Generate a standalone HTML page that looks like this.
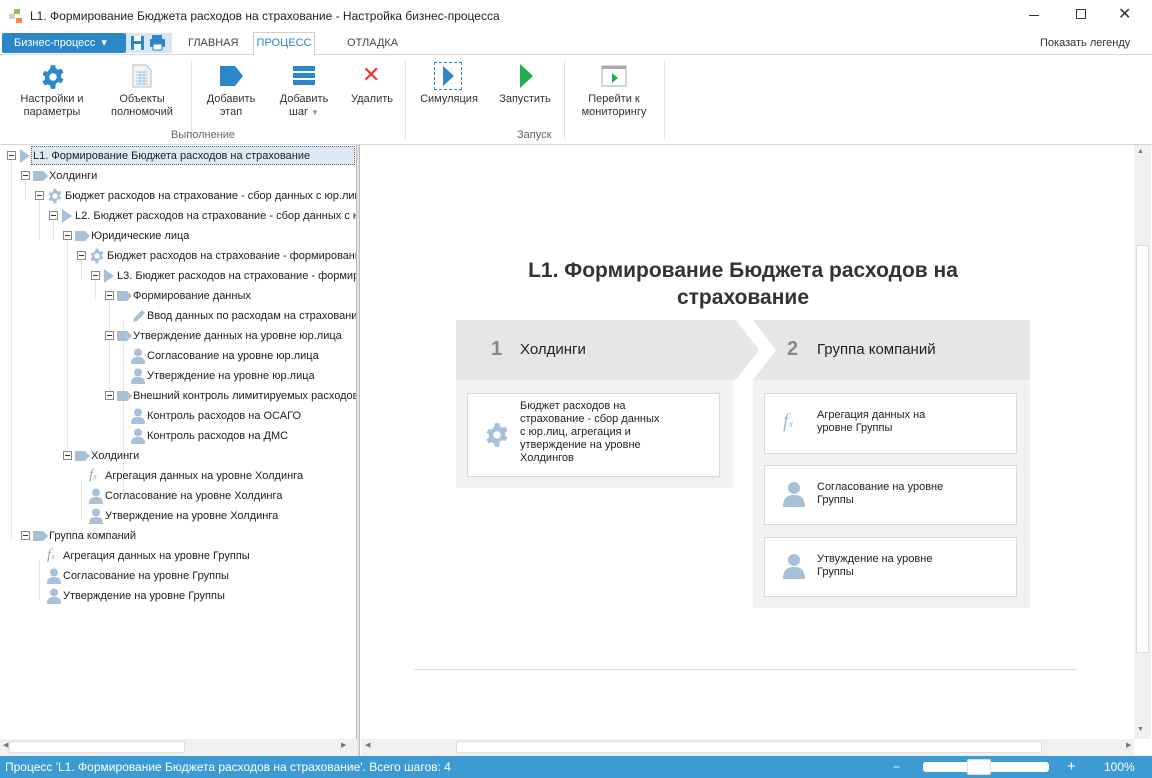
<!DOCTYPE html>
<html><head><meta charset="utf-8"><style>
*{margin:0;padding:0;box-sizing:border-box}
body{width:1152px;height:778px;overflow:hidden;background:#fff;font-family:"Liberation Sans","DejaVu Sans",sans-serif;font-size:11px;color:#222;position:relative}
.a{position:absolute}
.tb{font-size:12px;white-space:nowrap}
.rb{text-align:center;font-size:11px;color:#333;line-height:13px}
.row{position:absolute;height:20px;line-height:20px;white-space:nowrap;font-size:11px}
.ex{position:absolute;width:9px;height:9px;border:1px solid #888;background:#fff;top:5px}
.ex:after{content:"";position:absolute;left:1px;top:3px;width:5px;height:1px;background:#333}
.card{position:absolute;background:#fff;border:1px solid #d8d8d8;font-size:11px;line-height:13px;color:#222}
</style></head><body>
<!-- title -->
<svg class="a" style="left:8px;top:8px" width="16" height="16"><rect x="6" y="1" width="6" height="5" fill="#8bc34a"/><rect x="1" y="6" width="6" height="5" fill="#ccc"/><rect x="8" y="10" width="6" height="5" fill="#f28b50"/></svg>
<div class="a tb" style="left:30px;top:9px">L1. Формирование Бюджета расходов на страхование - Настройка бизнес-процесса</div>
<div class="a" style="left:1029px;top:15px;width:10px;height:1px;background:#333"></div>
<div class="a" style="left:1076px;top:9px;width:10px;height:10px;border:1px solid #333"></div>
<div class="a" style="left:1118px;top:4px;font-size:16px;color:#333">✕</div>
<!-- tabs -->
<div class="a" style="left:2px;top:33px;width:124px;height:20px;background:#2b87c8;border-radius:2px;color:#fff;line-height:20px;padding-left:12px">Бизнес-процесс &nbsp;▾</div>
<div class="a" style="left:126px;top:33px;width:46px;height:20px;background:#d6e6f3"></div>
<svg class="a" style="left:130px;top:35px" width="40" height="16"><rect x="1" y="1" width="13" height="14" rx="1" fill="#2b87c8"/><rect x="4" y="1" width="7" height="5" fill="#fff"/><rect x="4" y="9" width="7" height="6" fill="#fff"/><rect x="22" y="0" width="10" height="5" fill="#2b87c8"/><rect x="20" y="4" width="15" height="8" rx="1" fill="#2b87c8"/><rect x="23" y="9" width="9" height="6" fill="#fff" stroke="#2b87c8"/></svg>
<div class="a" style="left:188px;top:37px;color:#444">ГЛАВНАЯ</div>
<div class="a" style="left:253px;top:32px;width:62px;height:23px;border:1px solid #d0d0d0;border-bottom:none;background:#fff;color:#2b87c8;text-align:center;line-height:21px;z-index:2">ПРОЦЕСС</div>
<div class="a" style="left:347px;top:37px;color:#444">ОТЛАДКА</div>
<div class="a" style="left:1040px;top:37px;color:#333">Показать легенду</div>
<div class="a" style="left:0;top:54px;width:1152px;height:1px;background:#d6d6d6"></div>
<!-- ribbon -->
<div class="a" style="left:0;top:55px;width:1152px;height:90px;background:#fff"></div>
<svg class="a" style="left:40px;top:64px" width="26" height="26" viewBox="0 0 24 24"><path fill="#2b87c8" d="M10 1h4l.6 3a8 8 0 0 1 2.2 1.3l2.9-1 2 3.4-2.3 2a8 8 0 0 1 0 2.6l2.3 2-2 3.4-2.9-1a8 8 0 0 1-2.2 1.3L14 23h-4l-.6-3a8 8 0 0 1-2.2-1.3l-2.9 1-2-3.4 2.3-2a8 8 0 0 1 0-2.6l-2.3-2 2-3.4 2.9 1A8 8 0 0 1 9.4 4z"/><circle cx="12" cy="12" r="3.5" fill="#fff"/></svg>
<div class="a rb" style="left:12px;top:93px;width:80px">Настройки и<br>параметры</div>
<svg class="a" style="left:132px;top:64px" width="20" height="24"><path d="M1 1h13l5 5v17H1z" fill="#f4f4f4" stroke="#bbb"/><g stroke="#9cc4e4"><path d="M4 8h12M4 11h12M4 14h12M4 17h12M4 20h12M8 8v13M12 8v13"/></g></svg>
<div class="a rb" style="left:100px;top:93px;width:84px">Объекты<br>полномочий</div>
<div class="a" style="left:191px;top:60px;width:1px;height:80px;background:#e4e4e4"></div>
<svg class="a" style="left:220px;top:66px" width="24" height="20"><path d="M0 0h15l8 10-8 10H0z" fill="#2b87c8"/></svg>
<div class="a rb" style="left:198px;top:93px;width:66px">Добавить<br>этап</div>
<svg class="a" style="left:293px;top:66px" width="22" height="20"><rect y="0" width="22" height="5" fill="#2b87c8"/><rect y="7" width="22" height="5" fill="#2b87c8"/><rect y="14" width="22" height="5" fill="#2b87c8"/></svg>
<div class="a rb" style="left:271px;top:93px;width:66px">Добавить<br>шаг <span style="color:#999;font-size:8px">▼</span></div>
<div class="a" style="left:362px;top:62px;color:#e53935;font-size:22px">✕</div>
<div class="a rb" style="left:346px;top:93px;width:52px">Удалить</div>
<div class="a" style="left:405px;top:60px;width:1px;height:80px;background:#e4e4e4"></div>
<div class="a" style="left:434px;top:62px;width:28px;height:28px;border:1px dashed #2b87c8"></div>
<svg class="a" style="left:443px;top:66px" width="12" height="20"><path d="M0 0l11 10L0 20z" fill="#2b87c8"/></svg>
<div class="a rb" style="left:414px;top:93px;width:70px">Симуляция</div>
<svg class="a" style="left:520px;top:64px" width="14" height="24"><path d="M0 0l13 12L0 24z" fill="#1fae4e"/></svg>
<div class="a rb" style="left:492px;top:93px;width:66px">Запустить</div>
<div class="a" style="left:564px;top:60px;width:1px;height:80px;background:#e4e4e4"></div>
<svg class="a" style="left:601px;top:65px" width="26" height="22"><rect x="1" y="1" width="24" height="20" fill="#fff" stroke="#aaa"/><rect x="1" y="1" width="24" height="3" fill="#aaa"/><path d="M11 8l6 5-6 5z" fill="#1fae4e"/></svg>
<div class="a rb" style="left:570px;top:93px;width:88px">Перейти к<br>мониторингу</div>
<div class="a" style="left:664px;top:60px;width:1px;height:80px;background:#e4e4e4"></div>
<div class="a" style="left:171px;top:129px;color:#666">Выполнение</div>
<div class="a" style="left:517px;top:129px;color:#666">Запуск</div>
<div class="a" style="left:0;top:144px;width:1152px;height:1px;background:#d6d6d6"></div>
<!-- left panel -->
<div class="a" style="left:0;top:145px;width:357px;height:611px;border-right:1px solid #bbb;overflow:hidden">
<div class="a" style="left:31px;top:1px;width:324px;height:19px;background:#dde9f5;border:1px dotted #666"></div>
<svg class="a" style="left:0;top:0" width="357" height="600">
<g stroke="#ccc" stroke-dasharray="1 1"><path d="M11.5 16v380M25.5 36v20M39.5 56v40M53.5 76v20M67.5 96v220M81.5 116v20M95.5 136v20M109.5 156v100M123.5 176v180M81.5 336v40M39.5 416v40"/></g>
</svg>
<div id="tree"></div>
</div>
<div class="a" style="left:357px;top:145px;width:3px;height:611px;background:#e4e4e4;border-right:1px solid #bbb"></div>
<!-- left scrollbar -->
<div class="a" style="left:0;top:739px;width:357px;height:17px;background:#f0f0f0"></div>
<div class="a" style="left:9px;top:741px;width:176px;height:12px;background:#fff;border:1px solid #ddd;border-radius:2px"></div>
<div class="a" style="left:3px;top:741px;font-size:7px;color:#777">◀</div>
<div class="a" style="left:341px;top:741px;font-size:7px;color:#777">▶</div>
<!-- right panel -->
<div class="a" style="left:1134px;top:145px;width:17px;height:594px;background:#f0f0f0"></div>
<div class="a" style="left:1136px;top:245px;width:13px;height:408px;background:#fff;border:1px solid #ddd;border-radius:2px"></div>
<div class="a" style="left:1137px;top:148px;font-size:7px;color:#777">▲</div>
<div class="a" style="left:1137px;top:726px;font-size:7px;color:#777">▼</div>
<div class="a" style="left:361px;top:739px;width:773px;height:17px;background:#f0f0f0"></div>
<div class="a" style="left:456px;top:741px;width:586px;height:12px;background:#fff;border:1px solid #ddd;border-radius:2px"></div>
<div class="a" style="left:365px;top:741px;font-size:7px;color:#777">◀</div>
<div class="a" style="left:1126px;top:741px;font-size:7px;color:#777">▶</div>
<div class="a" style="left:414px;top:669px;width:663px;height:1px;background:#ddd"></div>
<div class="a" style="left:460px;top:257px;width:566px;text-align:center;font-size:21px;font-weight:bold;color:#333;line-height:27px">L1. Формирование Бюджета расходов на страхование</div>
<svg class="a" style="left:456px;top:320px" width="574" height="288">
<path d="M0 0h280l23 30-23 30H0z" fill="#e6e6e6"/>
<rect x="0" y="60" width="277" height="108" fill="#f2f2f2"/>
<path d="M297 0h277v60H297l23-30z" fill="#e6e6e6"/>
<rect x="297" y="60" width="277" height="228" fill="#f2f2f2"/>
</svg>
<div class="a" style="left:491px;top:338px;font-size:20px;font-weight:bold;color:#888">1</div>
<div class="a" style="left:520px;top:341px;font-size:15px;color:#222">Холдинги</div>
<div class="a" style="left:787px;top:338px;font-size:20px;font-weight:bold;color:#888">2</div>
<div class="a" style="left:817px;top:341px;font-size:15px;color:#222">Группа компаний</div>
<div class="card" style="left:467px;top:393px;width:253px;height:84px"><div class="a" style="left:52px;top:6px">Бюджет расходов на<br>страхование - сбор данных<br>с юр.лиц, агрегация и<br>утверждение на уровне<br>Холдингов</div></div>
<svg class="a" style="left:484px;top:422px" width="26" height="26" viewBox="0 0 24 24"><path fill="#a9c1d8" d="M10 1h4l.6 3a8 8 0 0 1 2.2 1.3l2.9-1 2 3.4-2.3 2a8 8 0 0 1 0 2.6l2.3 2-2 3.4-2.9-1a8 8 0 0 1-2.2 1.3L14 23h-4l-.6-3a8 8 0 0 1-2.2-1.3l-2.9 1-2-3.4 2.3-2a8 8 0 0 1 0-2.6l-2.3-2 2-3.4 2.9 1A8 8 0 0 1 9.4 4z"/><circle cx="12" cy="12" r="3.5" fill="#fff"/></svg>
<div class="card" style="left:764px;top:393px;width:253px;height:61px"><div class="a" style="left:52px;top:15px">Агрегация данных на<br>уровне Группы</div></div>
<div class="a" style="left:783px;top:410px;font-size:20px;font-style:italic;font-family:'Liberation Serif',serif;color:#a9b9c9">f<span style="font-size:10px">x</span></div>
<div class="card" style="left:764px;top:465px;width:253px;height:60px"><div class="a" style="left:52px;top:15px">Согласование на уровне<br>Группы</div></div>
<div class="card" style="left:764px;top:537px;width:253px;height:60px"><div class="a" style="left:52px;top:15px">Утвуждение на уровне<br>Группы</div></div>
<svg class="a" style="left:783px;top:481px" width="22" height="26"><circle cx="11" cy="7" r="6" fill="#a9c1d8"/><path d="M0 26c0-9 4-12 11-12s11 3 11 12z" fill="#a9c1d8"/></svg>
<svg class="a" style="left:783px;top:553px" width="22" height="26"><circle cx="11" cy="7" r="6" fill="#a9c1d8"/><path d="M0 26c0-9 4-12 11-12s11 3 11 12z" fill="#a9c1d8"/></svg>
<!-- status -->
<div class="a" style="left:0;top:756px;width:1152px;height:22px;background:#3d9bd4;color:#fff;font-size:12px;line-height:22px">
<span class="a" style="left:5px">Процесс 'L1. Формирование Бюджета расходов на страхование'. Всего шагов: 4</span>
<span class="a" style="left:893px">−</span>
<div class="a" style="left:923px;top:6px;width:126px;height:10px;background:#fff;border-radius:3px"></div>
<div class="a" style="left:967px;top:3px;width:24px;height:16px;background:#fff;border-radius:2px;border:1px solid #ddd"></div>
<span class="a" style="left:1067px;font-size:15px">+</span>
<span class="a" style="left:1104px">100%</span>
</div>
<script>
var T=[[0,'L1. Формирование Бюджета расходов на страхование','pl',1],[1,'Холдинги','tag',1],[2,'Бюджет расходов на страхование - сбор данных с юр.лиц','gear',1],[3,'L2. Бюджет расходов на страхование - сбор данных с юр.лиц','pl',1],[4,'Юридические лица','tag',1],[5,'Бюджет расходов на страхование - формирование','gear',1],[6,'L3. Бюджет расходов на страхование - формирование','pl',1],[7,'Формирование данных','tag',1],[8,'Ввод данных по расходам на страхование','pen',0],[7,'Утверждение данных на уровне юр.лица','tag',1],[8,'Согласование на уровне юр.лица','usr',0],[8,'Утверждение на уровне юр.лица','usr',0],[7,'Внешний контроль лимитируемых расходов','tag',1],[8,'Контроль расходов на ОСАГО','usr',0],[8,'Контроль расходов на ДМС','usr',0],[4,'Холдинги','tag',1],[5,'Агрегация данных на уровне Холдинга','fx',0],[5,'Согласование на уровне Холдинга','usr',0],[5,'Утверждение на уровне Холдинга','usr',0],[1,'Группа компаний','tag',1],[2,'Агрегация данных на уровне Группы','fx',0],[2,'Согласование на уровне Группы','usr',0],[2,'Утверждение на уровне Группы','usr',0]];
var I={pl:'<svg width="12" height="16"><path d="M1 1l10 7-10 7z" fill="#a9bfd4"/></svg>',tag:'<svg width="16" height="12"><path d="M0 1h10l5 5-5 5H0z" fill="#a9bfd4"/></svg>',gear:'<svg width="16" height="16" viewBox="0 0 24 24"><path fill="#a9c1d8" d="M10 1h4l.6 3a8 8 0 0 1 2.2 1.3l2.9-1 2 3.4-2.3 2a8 8 0 0 1 0 2.6l2.3 2-2 3.4-2.9-1a8 8 0 0 1-2.2 1.3L14 23h-4l-.6-3a8 8 0 0 1-2.2-1.3l-2.9 1-2-3.4 2.3-2a8 8 0 0 1 0-2.6l-2.3-2 2-3.4 2.9 1A8 8 0 0 1 9.4 4z"/><circle cx="12" cy="12" r="4" fill="#fff"/></svg>',pen:'<svg width="16" height="16"><path d="M2 14l1-4 8-8 3 3-8 8z" fill="#a9bfd4"/></svg>',usr:'<svg width="14" height="16"><circle cx="7" cy="4.5" r="4" fill="#a9c1d8"/><path d="M0 16c0-6 3-7 7-7s7 1 7 7z" fill="#a9c1d8"/></svg>',fx:'<span style="font-family:Liberation Serif,serif;font-style:italic;font-size:15px;color:#9aaabb">f<span style="font-size:8px">x</span></span>'};
var h='';T.forEach(function(r,i){var x=7+r[0]*14,y=i*20+1;h+='<div class="row" style="left:0;top:'+y+'px">'+(r[3]?'<div class="ex" style="left:'+x+'px"></div>':'')+'<span class="a" style="left:'+(x+12)+'px;top:0;height:20px;display:flex;align-items:center">'+I[r[2]]+'</span><span class="a" style="left:'+(x+(r[2]=='pl'?26:r[2]=='gear'?30:(r[3]?28:28)))+'px;top:0">'+r[1]+'</span></div>'});
document.getElementById('tree').innerHTML=h;
</script>
</body></html>
